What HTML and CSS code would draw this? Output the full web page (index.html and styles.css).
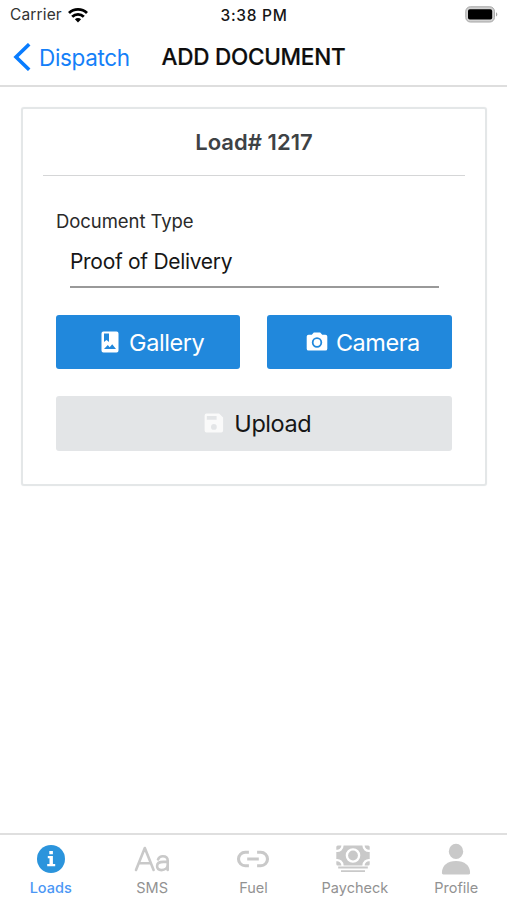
FILE: index.html
```html
<!DOCTYPE html>
<html lang="en">
<head>
<meta charset="utf-8">
<meta name="viewport" content="width=device-width, initial-scale=1">
<title>Add Document</title>
<link rel="stylesheet" href="styles.css">
</head>
<body>
<div class="status">
  <div class="carrier"><span>Carrier</span>
    <svg width="20" height="15" viewBox="0 0 20 15" fill="none" stroke="#000" stroke-width="2.8"><path d="M1 5.1a12.8 12.8 0 0 1 18 0M4.2 8.7a8.2 8.2 0 0 1 11.6 0"/><path d="M10 14.4l-3.1-3.1a4.4 4.4 0 0 1 6.2 0z" fill="#000" stroke="none"/></svg>
  </div>
  <time class="clock">3:38 PM</time>
  <svg class="battery" width="33" height="17" viewBox="0 0 33 17"><rect x=".8" y=".8" width="28.6" height="15.2" rx="4.5" fill="#d2d2d2" stroke="#a5a5a5" stroke-width="1"/><rect x="3" y="3.2" width="24.2" height="10.4" rx="1.8"/><path d="M31 6.2q1.3.6 1.3 2.2T31 10.6z" fill="#a5a5a5"/></svg>
</div>
<header class="nav">
  <a class="back"><svg width="18" height="28" viewBox="0 0 18 28" fill="none" stroke="#087cff" stroke-width="3.6"><path d="M16.2 1.2L3 14l13.2 12.8"/></svg><span>Dispatch</span></a>
  <h1>ADD DOCUMENT</h1>
</header>
<main>
  <section class="card">
    <h2><span>Load# 1217</span></h2>
    <div class="form">
      <label class="label" for="type"><span>Document Type</span></label>
      <div class="select" id="type"><span>Proof of Delivery</span></div>
      <div class="pair">
        <button class="btn gallery"><svg width="18" height="22" viewBox="0 0 18 22"><path fill="#fff" fill-rule="evenodd" d="M2.4.5h13.2a1.9 1.9 0 0 1 1.9 1.9v17.2a1.9 1.9 0 0 1-1.9 1.9H2.4a1.9 1.9 0 0 1-1.9-1.9V2.4A1.9 1.9 0 0 1 2.4.5zM3 2.6v8.3l2.5-1.8L8 10.9V2.6zM3 18h12l-3.8-4.8-2.5 3-1.9-2.1z"/></svg><span>Gallery</span></button>
        <button class="btn camera"><svg width="22" height="20" viewBox="0 0 22 20"><path fill="#fff" fill-rule="evenodd" d="M7.8.5h6.4l2 2.2h3.2a1.9 1.9 0 0 1 1.9 1.9v12.1a1.9 1.9 0 0 1-1.9 1.9H2.6a1.9 1.9 0 0 1-1.9-1.9V4.6a1.9 1.9 0 0 1 1.9-1.9h3.2zM11 5.3a5.2 5.2 0 1 0 0 10.4 5.2 5.2 0 0 0 0-10.4z"/><circle cx="11" cy="10.5" r="3.4" fill="#fff"/></svg><span>Camera</span></button>
      </div>
      <button class="btn upload"><svg width="20" height="20" viewBox="0 0 20 20"><path fill="#fafafa" fill-rule="evenodd" d="M2.6.6h12.5l4 4v12.8a2 2 0 0 1-2 2H2.6a2 2 0 0 1-2-2V2.6a2 2 0 0 1 2-2zM2.8 3v3.8h9.8V3zM9.9 11a2.9 2.9 0 1 0 0 5.8 2.9 2.9 0 0 0 0-5.8z"/></svg><span>Upload</span></button>
    </div>
  </section>
</main>
<nav class="tabs">
  <a class="tab active"><svg width="30" height="30" viewBox="0 0 30 30"><circle cx="15" cy="15" r="14" fill="#2b94dc"/><path fill="#fff" d="M13.3 7h3.6v3.3h-3.6zM11.8 12.1h5.1v8h2.3v2.2h-8v-2.2h2.3v-5.8h-1.7z"/></svg><span>Loads</span></a>
  <a class="tab"><svg width="36" height="30" viewBox="0 0 36 30" fill="none" stroke="#c9c9c9" stroke-width="2.6" stroke-linecap="round" stroke-linejoin="round"><path d="M2 26L10.8 4l8.8 22M5 19.2h11.6M24 15.4c1-2.4 2.7-3.2 4.8-3.2 3.3 0 4.9 1.6 4.9 4.3V26M33.7 17.9h-4.4c-4 0-6.2 1.4-6.2 4.1 0 2.5 1.8 4.1 4.4 4.1 3.5 0 6.2-2.2 6.2-5.4"/></svg><span>SMS</span></a>
  <a class="tab"><svg width="34" height="30" viewBox="1 0 34 30" fill="none" stroke="#c9c9c9" stroke-width="3.1"><path d="M13.9 8.3H10.2a6.7 6.7 0 0 0 0 13.4h3.7M22.1 8.3h3.7a6.7 6.7 0 0 1 0 13.4h-3.7M12.2 15h11.6"/></svg><span>Fuel</span></a>
  <a class="tab"><svg class="cash" width="36" height="30" viewBox="0 0 36 30" fill="#c9c9c9"><path fill-rule="evenodd" d="M8.6 1.5h18.8a6.5 6.5 0 0 0 7.3 6.5v7a6.5 6.5 0 0 0-7.3 6.5H8.6A6.5 6.5 0 0 0 1.3 15V8a6.5 6.5 0 0 0 7.3-6.5zM18 4.2a7.3 7.3 0 1 0 0 14.6 7.3 7.3 0 0 0 0-14.6z"/><circle cx="18" cy="11.5" r="4.9"/><path d="M1.3 3q0-1.5 1.5-1.5h3.6a4.3 4.3 0 0 1-5.1 4.2zM34.7 3q0-1.5-1.5-1.5h-3.6a4.3 4.3 0 0 0 5.1 4.2zM1.3 17.3a4.3 4.3 0 0 1 5.1 4.2H2.8q-1.5 0-1.5-1.5zM34.7 17.3a4.3 4.3 0 0 0-5.1 4.2h3.6q1.5 0 1.5-1.5z"/><path d="M3.2 22.6h29.6v1.8H3.2zM6 26.2h24V28H6z"/></svg><span>Paycheck</span></a>
  <a class="tab"><svg width="30" height="32" viewBox="0 0 30 32" fill="#c9c9c9"><ellipse cx="15" cy="8.4" rx="7.2" ry="7.7"/><path d="M.9 30c0-7.6 5.6-12 14.1-12s14.1 4.4 14.1 12q0 1.4-1.4 1.4H2.3Q.9 31.4.9 30z"/></svg><span>Profile</span></a>
</nav>
</body>
</html>
```
FILE: styles.css
```css
* { box-sizing: border-box; }
body {
  margin: 0;
  height: 900px;
  display: flex;
  flex-direction: column;
  overflow: hidden;
  background: #fff;
  color: #161616;
  font-family: Inter, "Liberation Sans", sans-serif;
}
svg { display: block; flex: none; }
.status {
  height: 30px;
  padding: 0 9px 0 10px;
  display: grid;
  grid-template-columns: 210.5px 1fr auto;
  align-items: center;
  font-size: 15.5px;
  line-height: 20px;
}
.carrier { display: flex; align-items: center; gap: 6px; color: #333; }
.carrier span { letter-spacing: 0.15px; }
.clock { font-weight: 500; font-size: 15.5px; letter-spacing: 0.7px; padding-top: 1px; }
.battery { margin-top: -2px; }
.nav {
  height: 57px;
  padding: 0 0 1px 13px;
  display: flex;
  align-items: center;
  border-bottom: 2px solid #dedede;
}
.back { width: 148.5px; display: flex; align-items: center; gap: 8px; color: #1480f8; font-size: 22.5px; letter-spacing: -0.35px; }
h1 { margin: 0; padding-bottom: 1px; font-size: 22.5px; font-weight: 500; letter-spacing: -0.25px; color: #0d0d0d; white-space: nowrap; -webkit-text-stroke: 0.2px #0d0d0d; }
main { flex: 1; padding: 20px 20px 0 21px; }
.card {
  height: 379px;
  padding: 0 20px;
  border: 2px solid #e4e7e8;
  border-radius: 3px;
  box-shadow: 0 0 1px #e4e7e8;
}
h2 {
  height: 67px;
  margin: 0;
  display: flex;
  align-items: center;
  justify-content: center;
  border-bottom: 1px solid #d5d6d7;
  color: #3e4245;
  font-size: 22px;
  font-weight: 600;
  letter-spacing: 0.05px;
}
.form { padding: 32px 13.5px 0 13px; }
.label { display: block; height: 27px; line-height: 27px; font-size: 18.5px; letter-spacing: -0.07px; color: #2a2a2a; }
.select {
  height: 52.5px;
  margin: 0 13px 27px 14px;
  line-height: 54px;
  font-size: 21px;
  letter-spacing: -0.3px;
  border-bottom: 2px solid #999;
}
.pair { display: grid; grid-template-columns: 1fr 1fr; gap: 27px; margin-bottom: 27px; }
.btn {
  height: 54.5px;
  width: 100%;
  padding: 0 0 0 9px;
  display: flex;
  align-items: center;
  justify-content: center;
  gap: 10px;
  border: 0;
  border-radius: 3px;
  background: #2188dc;
  color: #fff;
  font: 400 23.5px Inter, "Liberation Sans", sans-serif;
  letter-spacing: -0.45px;
}
.btn span { line-height: 30px; padding-top: 2px; }
.btn.camera { gap: 8px; padding-left: 7px; }
.btn.upload { padding-left: 8px; background: #e3e5e7; color: #161616; }
.tabs {
  height: 67px;
  display: grid;
  grid-template-columns: repeat(5, 1fr);
  border-top: 2px solid #dfdfdf;
}
.tab {
  display: flex;
  flex-direction: column;
  align-items: center;
  color: #929292;
  font-size: 14.5px;
  line-height: 18px;
}
.tab svg { height: 32px; margin: 8px 0 4px; }
.tab .cash { margin-left: -3px; }
.active { color: #4b97f5; font-weight: 500; }
```
